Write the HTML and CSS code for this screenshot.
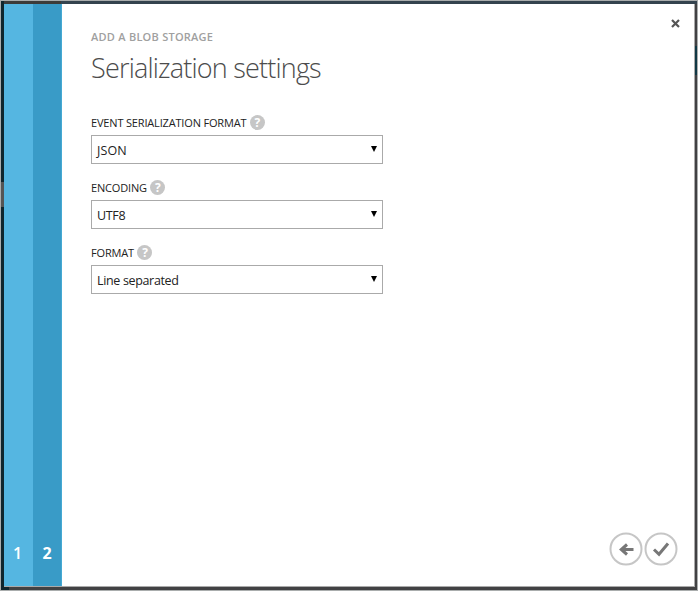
FILE: index.html
```html
<!DOCTYPE html>
<html lang="en">
<head>
<meta charset="utf-8">
<title>Add a blob storage</title>
<link rel="stylesheet" href="styles.css">
</head>
<body>
<div class="backdrop">
  <div class="dialog">
    <nav class="steps">
      <div class="step">1</div>
      <div class="step current">2</div>
    </nav>
    <main class="content">
      <header class="head">
        <div>
          <div class="subtitle">ADD A BLOB STORAGE</div>
          <h1 class="title">Serialization settings</h1>
        </div>
        <svg class="close" width="9" height="9" viewBox="0 0 9 9"><path d="M1 1L8 8M8 1L1 8"/></svg>
      </header>
      <form class="form">
        <div class="field">
          <div class="label"><span>EVENT SERIALIZATION FORMAT</span><span class="help">?</span></div>
          <div class="select"><span class="json">JSON</span><i class="caret"></i></div>
        </div>
        <div class="field">
          <div class="label"><span>ENCODING</span><span class="help">?</span></div>
          <div class="select"><span>UTF8</span><i class="caret"></i></div>
        </div>
        <div class="field">
          <div class="label"><span>FORMAT</span><span class="help">?</span></div>
          <div class="select"><span>Line separated</span><i class="caret"></i></div>
        </div>
      </form>
      <footer class="actions">
        <svg width="34" height="34" viewBox="0 0 34 34"><circle class="ring" cx="17" cy="17" r="15.5"/><path class="arrow" d="M24.5 17.5H12M18 12.5L12.3 17.5L18 22.5"/></svg>
        <svg width="34" height="34" viewBox="0 0 34 34"><circle class="ring" cx="17" cy="17" r="15.5"/><path class="check" d="M10 17.5L15 22.3L24 11.5"/></svg>
      </footer>
    </main>
  </div>
</div>
</body>
</html>
```
FILE: styles.css
```css
* { box-sizing: border-box; }
body {
  margin: 0;
  background: #a9acac;
  font-family: "Open Sans", "Noto Sans", sans-serif;
  color: #222;
}
.backdrop {
  width: 698px;
  height: 591px;
  padding: 3px 3px 4px;
  border: 1px solid #aaadad;
  background:
    linear-gradient(#555, #555) 0 181px / 3px 25px no-repeat,
    linear-gradient(#103845, #103845) 694px 45px / 2px 29px no-repeat,
    linear-gradient(#10262e, #10262e) 0 0 / 3px 100% no-repeat,
    linear-gradient(#10262e, #10262e) 0 100% / 8px 3px no-repeat,
    linear-gradient(90deg, #3c3b39 60px, #34434e 60px) 0 0 / 100% 3px no-repeat,
    #414143;
}
.dialog {
  display: flex;
  width: 691px;
  height: 583px;
  background: #fff;
  border-right: 1px solid #aaa;
  border-bottom: 1px solid #aaa;
}
.steps { display: flex; }
.step {
  display: flex;
  align-items: flex-end;
  justify-content: center;
  width: 29px;
  padding: 0 2px 22px 0;
  background: #55b6e1;
  color: #fff;
  font-size: 16px;
  font-weight: 600;
  line-height: 22px;
}
.step.current { padding-right: 0; background: #399bc7; border-right: 1px solid #45a9d3; font-weight: 700; }
.content {
  display: flex;
  flex: 1;
  flex-direction: column;
  padding: 15px 14px 20px 29px;
}
.head { display: flex; justify-content: space-between; height: 92px; }
.subtitle {
  margin-top: 9px;
  color: #a0a0a0;
  font-size: 11px;
  font-weight: 600;
  letter-spacing: 0.25px;
  line-height: 18px;
  white-space: nowrap;
}
.title {
  margin: 3px 0 0;
  color: #4c4c4c;
  font-size: 27px;
  font-weight: 300;
  letter-spacing: -0.8px;
  line-height: 38px;
  white-space: nowrap;
}
.close { fill: none; stroke: #555; stroke-width: 2.2; }
.field { width: 292px; height: 65px; }
.label {
  display: flex;
  align-items: center;
  gap: 4px;
  height: 24px;
  padding-bottom: 1px;
  font-size: 11px;
  letter-spacing: -0.17px;
  white-space: nowrap;
}
.help {
  width: 15px;
  height: 15px;
  margin: -1px 0 0 -0.5px;
  border-radius: 50%;
  background: #c6c6c6;
  color: #fff;
  font-size: 12px;
  font-weight: 700;
  line-height: 15px;
  text-align: center;
}
.select {
  display: flex;
  align-items: center;
  justify-content: space-between;
  height: 29px;
  padding: 0 5px;
  border: 1px solid #aaa;
  font-size: 12.5px;
  letter-spacing: -0.34px;
}
.select span { padding-top: 1px; }
.select .json { letter-spacing: 0.1px; }
.caret { border: 3.5px solid transparent; border-top: 6px solid #000; border-bottom: 0; margin-top: -1px; }
.actions { display: flex; justify-content: flex-end; gap: 1px; margin: auto 2px 0 0; }
.ring { fill: none; stroke: #c6c6c6; stroke-width: 2; }
.arrow, .check { fill: none; stroke: #777; stroke-width: 3; }
```
